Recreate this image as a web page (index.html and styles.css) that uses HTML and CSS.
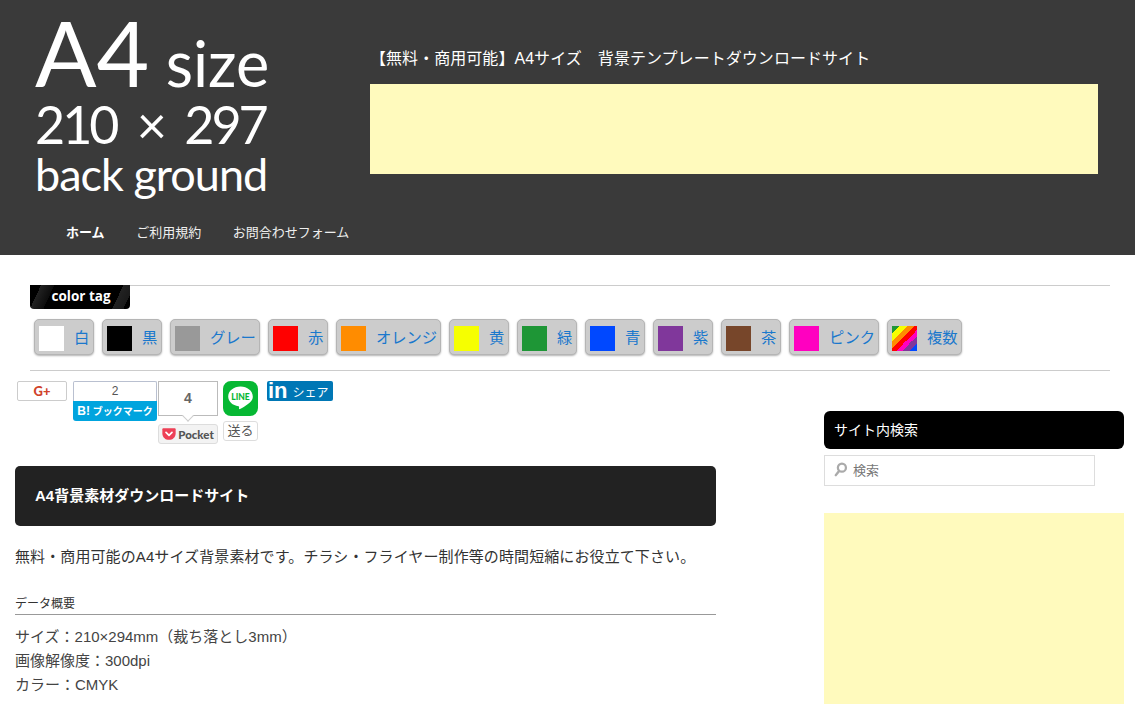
FILE: index.html
```html
<!DOCTYPE html>
<html lang="ja">
  <head>
    <meta charset="UTF-8" />
    <meta name="viewport" content="width=device-width, initial-scale=1.0" />
    <title>A4 size 210 × 297 back ground</title>
    <link rel="stylesheet" href="styles.css">
  </head>
  <body>
    <header class="site-header">
      <div class="header-left">
        <a class="logo" href="#">
          <span class="logo-a4">A4 <small>size</small></span>
          <span class="logo-size">210 × 297</span>
          <span class="logo-back">back ground</span>
        </a>
        <nav class="menu">
          <a class="current" href="#">ホーム</a>
          <a href="#">ご利用規約</a>
          <a href="#">お問合わせフォーム</a>
        </nav>
      </div>
      <div class="header-right">
        <p class="site-desc">【無料・商用可能】A4サイズ　背景テンプレートダウンロードサイト</p>
        <div class="ad ad-top"></div>
      </div>
    </header>

    <section class="tags">
      <div class="tags-label">color tag</div>
      <div class="tag-list">
        <a class="tag" href="#"><i class="swatch white"></i>白</a>
        <a class="tag" href="#"><i class="swatch black"></i>黒</a>
        <a class="tag" href="#"><i class="swatch gray"></i>グレー</a>
        <a class="tag" href="#"><i class="swatch red"></i>赤</a>
        <a class="tag" href="#"><i class="swatch orange"></i>オレンジ</a>
        <a class="tag" href="#"><i class="swatch yellow"></i>黄</a>
        <a class="tag" href="#"><i class="swatch green"></i>緑</a>
        <a class="tag" href="#"><i class="swatch blue"></i>青</a>
        <a class="tag" href="#"><i class="swatch purple"></i>紫</a>
        <a class="tag" href="#"><i class="swatch brown"></i>茶</a>
        <a class="tag" href="#"><i class="swatch pink"></i>ピンク</a>
        <a class="tag" href="#"><i class="swatch multi"></i>複数</a>
      </div>
    </section>

    <div class="columns">
      <main class="content">
        <div class="share">
          <a class="share-gplus" href="#">G+</a>
          <div class="share-hatena">
            <span class="hatena-count">2</span>
            <span class="hatena-label"><b>B!</b> ブックマーク</span>
          </div>
          <div class="share-pocket">
            <span class="pocket-count">4</span>
            <a class="pocket-btn" href="#">
              <svg viewBox="0 0 16 16" width="14" height="14">
                <path fill="#ee4056" d="M1.6 1.5h12.8c.7 0 1.2.5 1.2 1.2v4.6c0 4.2-3.4 7.4-7.6 7.4S.4 11.500.4 7.300V2.700c0-.7.5-1.200 1.200-1.200z" />
                <path fill="none" stroke="#fff" stroke-width="2" stroke-linecap="round" stroke-linejoin="round" d="M4.600 6.200 8 9.500l3.400-3.300" />
              </svg>
              Pocket
            </a>
          </div>
          <div class="share-line">
            <svg class="line-icon" viewBox="0 0 35 35" width="35" height="35">
              <rect width="35" height="35" rx="8" fill="#06b833" />
              <path fill="#fff" d="M17.500 5.500c-6.800 0-12.300 4.400-12.300 9.900 0 4.900 4.400 9 10.300 9.800.9.200.6 1.300.5 2.400 0 .6.400.8 1 .5 2.300-1.200 9.600-5.400 11.600-8.600 1-1.400 1.200-2.800 1.200-4.100 0-5.500-5.500-9.900-12.300-9.900z" />
              <text class="line-text" x="17.500" y="18.500" text-anchor="middle">LINE</text>
            </svg>
            <a class="line-btn" href="#">送る</a>
          </div>
          <a class="share-linkedin" href="#"><b>in</b><span>シェア</span></a>
        </div>

        <h1 class="page-title">A4背景素材ダウンロードサイト</h1>
        <p class="lead">無料・商用可能のA4サイズ背景素材です。チラシ・フライヤー制作等の時間短縮にお役立て下さい。</p>
        <h2 class="data-title">データ概要</h2>
        <p class="data-list">サイズ：210×294mm（裁ち落とし3mm）<br>画像解像度：300dpi<br>カラー：CMYK</p>
      </main>

      <aside class="sidebar">
        <h3 class="widget-title">サイト内検索</h3>
        <form class="search">
          <svg viewBox="0 0 16 16" width="15" height="15">
            <circle cx="9.500" cy="6" r="4.300" fill="none" stroke="#aaa" stroke-width="2.400" />
            <path stroke="#aaa" stroke-width="2.600" stroke-linecap="round" d="M6.500 9.500 3 14" />
          </svg>
          <span>検索</span>
        </form>
        <div class="ad ad-side"></div>
      </aside>
    </div>
  </body>
</html>
```

FILE: styles.css
```css
html,
body {
  height: 704px;
  overflow: hidden;
}

body {
  font-family: "Liberation Sans", "Noto Sans CJK JP", sans-serif;
  margin: 0;
  background-color: #fff;
  color: #333;
}

a {
  text-decoration: none;
}

.site-header {
  background-color: #3a3a3a;
  height: 255px;
  display: flex;
  color: #fff;
}

.header-left {
  width: 370px;
  flex-shrink: 0;
}

.logo {
  display: flex;
  flex-direction: column;
  padding: 16px 0 0 35px;
  height: 203px;
  box-sizing: border-box;
  color: #fff;
  font-family: "Lato", sans-serif;
  white-space: nowrap;
}

.logo span {
  display: block;
}

.logo-a4 {
  font-size: 91px;
  line-height: 71px;
  letter-spacing: 0;
}

.logo-a4 small {
  font-size: 63px;
  margin-left: -7px;
}

.logo-size {
  font-size: 52px;
  line-height: 52px;
  letter-spacing: -3px;
  word-spacing: 10px;
}

.logo-back {
  font-size: 45px;
  line-height: 49px;
  letter-spacing: -1px;
}

.menu {
  display: flex;
  gap: 31.500px;
  padding: 21px 0 0 66px;
  font-size: 13px;
  line-height: 18px;
}

.menu a {
  color: #eee;
  white-space: nowrap;
}

.menu .current {
  font-weight: bold;
  color: #fff;
}

.site-desc {
  margin: 0;
  padding-top: 48px;
  font-size: 16px;
  line-height: 22px;
  height: 36px;
  letter-spacing: 0.050px;
}

.ad {
  background-color: #fffabd;
}

.ad-top {
  width: 728px;
  height: 90px;
}

.tags {
  margin: 30px 25px 0 30px;
  border-top: 1px solid #ccc;
  border-bottom: 1px solid #ccc;
  height: 84px;
}

.tags-label {
  width: 100px;
  height: 24px;
  margin-top: -1px;
  border-radius: 0 0 4px 4px;
  background: linear-gradient(115deg, #000 10%, #222 10%, #0c0c0c 22%, #000 22%, #000 84%, #222 84%, #1a1a1a 94%, #000 94%);
  color: #fff;
  font-family: "Open Sans", sans-serif;
  font-size: 13.500px;
  font-weight: 700;
  line-height: 23px;
  text-align: center;
  padding-left: 2px;
  box-sizing: border-box;
}

.tag-list {
  display: flex;
  gap: 8px;
  margin: 10px 0 0 4px;
}

.tag {
  display: flex;
  align-items: center;
  min-width: 60px;
  height: 36px;
  padding: 0 3px 2px 5px;
  box-sizing: border-box;
  background-color: #ccc;
  border: 1px solid #b5b5b5;
  border-radius: 5px;
  box-shadow: 0 1px 2px rgba(0, 0, 0, 0.3);
  color: #1a78cc;
  font-size: 15.300px;
  white-space: nowrap;
}

.swatch {
  width: 25px;
  height: 25px;
  margin: 4px 10px 0 -1px;
  flex-shrink: 0;
}

.white { background-color: #fff; }
.black { background-color: #000; }
.gray { background-color: #999; }
.red { background-color: #f00; }
.orange { background-color: #ff8c00; }
.yellow { background-color: #f6ff00; }
.green { background-color: #1e9636; }
.blue { background-color: #0048ff; }
.purple { background-color: #80379b; }
.brown { background-color: #77462a; }
.pink { background-color: #ff00c0; }

.multi {
  background: linear-gradient(135deg, #1e9636 0 14%, #f6ff00 14% 30%, #ff8c00 30% 45%, #f00 45% 58%, #ff00c0 58% 70%, #80379b 70% 85%, #0048ff 85%);
}

.columns {
  display: flex;
  padding-left: 15px;
}

.content {
  width: 701px;
  flex-shrink: 0;
}

.share {
  display: flex;
  align-items: flex-start;
  height: 85px;
  padding: 10px 0 0 2px;
}

.share-gplus {
  width: 50px;
  height: 20px;
  box-sizing: border-box;
  border: 1px solid #ccc;
  border-radius: 2px;
  color: #d0422a;
  font-family: "Lato", sans-serif;
  font-size: 13px;
  font-weight: 900;
  line-height: 18px;
  text-align: center;
}

.share-hatena {
  width: 84px;
  margin-left: 6px;
  display: flex;
  flex-direction: column;
  font-size: 12px;
  text-align: center;
}

.hatena-count {
  height: 20px;
  box-sizing: border-box;
  border: 1px solid #b9c0d0;
  border-bottom: 0;
  border-radius: 2px 2px 0 0;
  color: #555;
  line-height: 19px;
}

.hatena-label {
  height: 20px;
  background-color: #00a4de;
  border-radius: 0 0 3px 3px;
  color: #fff;
  font-size: 10px;
  font-weight: bold;
  line-height: 20px;
  white-space: nowrap;
}

.hatena-label b {
  font-size: 12px;
}

.share-pocket {
  width: 60px;
  margin-left: 1px;
  position: relative;
}

.pocket-count {
  display: block;
  height: 35px;
  box-sizing: border-box;
  border: 1px solid #bbb;
  color: #666;
  font-size: 14px;
  font-weight: bold;
  line-height: 33px;
  text-align: center;
}

/* little tail under the count box */
.pocket-count::after {
  content: "";
  position: absolute;
  left: 26px;
  top: 31px;
  width: 7px;
  height: 7px;
  background-color: #fff;
  border-right: 1px solid #ccc;
  border-bottom: 1px solid #ccc;
  transform: rotate(45deg);
}

.pocket-btn {
  display: flex;
  align-items: center;
  justify-content: center;
  gap: 2px;
  height: 20px;
  margin-top: 8px;
  box-sizing: border-box;
  background-color: #f3f3f3;
  border: 1px solid #ddd;
  border-radius: 3px;
  color: #555;
  font-family: "Lato", sans-serif;
  font-size: 11.500px;
  font-weight: 900;
}

.share-line {
  width: 35px;
  margin-left: 5px;
}

.line-icon {
  display: block;
}

.line-text {
  fill: #06b833;
  font-family: "Lato", sans-serif;
  font-size: 8.500px;
  font-weight: 900;
}

.line-btn {
  display: block;
  height: 20px;
  margin-top: 5px;
  box-sizing: border-box;
  border: 1px solid #ddd;
  border-radius: 3px;
  color: #555;
  font-size: 13px;
  line-height: 17px;
  text-align: center;
}

.share-linkedin {
  display: flex;
  align-items: center;
  width: 66px;
  height: 20px;
  margin-left: 9px;
  padding-left: 1px;
  box-sizing: border-box;
  background-color: #0077b5;
  border-radius: 2px;
  color: #fff;
  font-size: 12px;
}

.share-linkedin b {
  font-size: 22px;
  line-height: 20px;
  margin-right: 5px;
}

.page-title {
  margin: 0;
  height: 60px;
  padding-left: 20px;
  background-color: #222;
  border-radius: 5px;
  color: #fff;
  font-size: 15px;
  font-weight: bold;
  line-height: 60px;
}

.lead {
  margin: 19px 0 0;
  font-size: 15px;
  line-height: 24px;
  letter-spacing: 0.100px;
}

.data-title {
  margin: 26px 0 0;
  height: 19px;
  border-bottom: 1px solid #999;
  font-size: 12px;
  font-weight: normal;
  line-height: 18px;
}

.data-list {
  margin: 10px 0 0;
  font-size: 15px;
  line-height: 24px;
  color: #444;
}

.sidebar {
  width: 300px;
  margin-left: 108px;
  padding-top: 40px;
  flex-shrink: 0;
}

.widget-title {
  margin: 0;
  height: 38px;
  padding-left: 10px;
  background-color: #000;
  border-radius: 6px;
  color: #fff;
  font-size: 14px;
  font-weight: normal;
  line-height: 38px;
}

.search {
  display: flex;
  align-items: center;
  gap: 5px;
  width: 271px;
  height: 31px;
  margin-top: 6px;
  padding: 0 0 2px 8px;
  box-sizing: border-box;
  border: 1px solid #ddd;
  color: #777;
  font-size: 13px;
}

.ad-side {
  height: 191px;
  margin-top: 27px;
}
```
